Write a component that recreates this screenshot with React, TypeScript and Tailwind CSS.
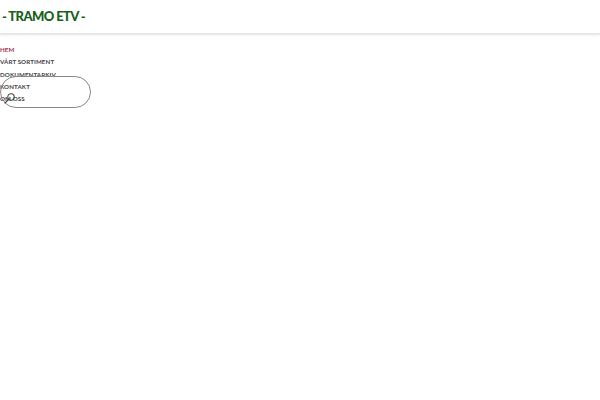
const NAV = ['Hem', 'Vårt sortiment', 'Dokumentarkiv', 'Kontakt', 'Om oss'];

export default function App() {
  return (
    <div className="min-h-screen w-full bg-white" style={{ fontFamily: 'Lato, "Noto Sans", sans-serif' }}>
      <header className="h-[34px] w-full border-b border-[#e4e4e4] shadow-[0_1px_2px_rgba(0,0,0,0.12)] flex items-center pl-[2px]">
        <span className="text-[13px] font-black text-[#17601a] tracking-[-0.6px]">- TRAMO ETV -</span>
      </header>

      <nav className="relative pt-[10px]">
        <ul className="flex flex-col">
          {NAV.map((item, i) => (
            <li
              key={item}
              className={
                'h-[12.3px] leading-[12.3px] text-[6.2px] font-bold uppercase tracking-[0.1px] ' +
                (i === 0 ? 'text-[#a3324f]' : 'text-[#444]')
              }
            >
              {item}
            </li>
          ))}
        </ul>
        <div className="absolute left-0 top-[42px] w-[91px] h-[32px] rounded-full border border-[#888]">
          <svg
            width="12"
            height="12"
            viewBox="0 0 12 12"
            fill="none"
            stroke="#444"
            strokeWidth="1.1"
            className="absolute left-[2px] top-[15px]"
          >
            <circle cx="8" cy="5" r="3.2" />
            <path d="M5.7 7.3 L2 11" strokeLinecap="round" />
          </svg>
        </div>
      </nav>
    </div>
  );
}
